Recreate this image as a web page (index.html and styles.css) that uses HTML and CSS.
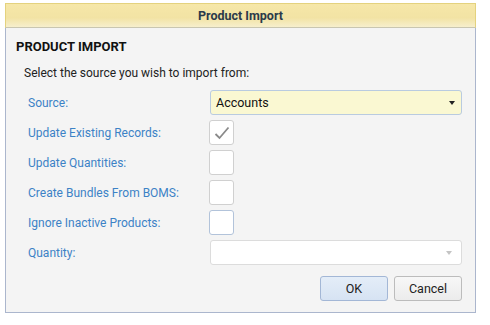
FILE: index.html
```html
<!doctype html>
<html>
<head>
<meta charset="utf-8">
<title>Product Import</title>
<link rel="stylesheet" href="styles.css">
</head>
<body>
<div class="win">
    <div class="winTitle">Product Import</div>
    <div class="winBody">
        <h2>PRODUCT IMPORT</h2>
        <p class="intro">Select the source you wish to import from:</p>
        <div class="form">
            <label>Source:</label>
            <div class="combo source">
                <span>Accounts</span>
                <i class="arrow"></i>
            </div>

            <label>Update Existing Records:</label>
            <div class="chk">
                <svg width="18" height="16" viewBox="0 0 18 16"><path d="M2.5 9 L6.5 13 L15.5 2.5" fill="none" stroke="#8a8a8a" stroke-width="1.8"/></svg>
            </div>

            <label>Update Quantities:</label>
            <div class="chk"></div>

            <label>Create Bundles From BOMS:</label>
            <div class="chk"></div>

            <label>Ignore Inactive Products:</label>
            <div class="chk focus"></div>

            <label>Quantity:</label>
            <div class="combo empty">
                <span></span>
                <i class="arrow"></i>
            </div>
        </div>
        <div class="btns">
            <button class="btn ok" type="button">OK</button>
            <button class="btn" type="button">Cancel</button>
        </div>
    </div>
</div>
</body>
</html>
```

FILE: styles.css
```css
*{ margin:0; padding:0; box-sizing:border-box}
body{ background:#fff; font-family:Roboto, "Liberation Sans", Arial, sans-serif; font-size:12px}
.win{ width:471px; margin:3px 0 0 5px}
.winTitle{ height:25px; line-height:24px; text-align:center; font-weight:bold; font-size:12.5px; color:#2b3a4a; border:1px solid #e4d27e; border-bottom-color:#c9c6b0; background:linear-gradient(#f6e7a8,#f2e3a4 60%,#f7efcd)}
.winBody{ height:285px; background:#f4f4f4; border:1px solid #abb6cd; border-top:none; padding:10px 0 0 10px}
.winBody h2{ font-size:13px; font-weight:bold; color:#111; line-height:16px; margin-top:1px}
.intro{ color:#222; font-size:12px; line-height:16px; margin:10px 0 0 8px}
.form{ display:grid; grid-template-columns:182px 252px; grid-auto-rows:25px; row-gap:5px; margin:9px 0 0 12px; align-items:center}
.form label{ color:#3c82c6; font-size:12px}
.combo{ height:25px; border:1px solid #c6d2e2; border-radius:3px; display:flex; align-items:center; justify-content:space-between; padding:0 6px 0 5px; font-size:12.5px; color:#111}
.source{ background:#faf8d2; border-color:#b9cbe0}
.empty{ background:#fff; border-color:#dcdcdc}
.arrow{ width:0; height:0; border-left:3.5px solid transparent; border-right:3.5px solid transparent; border-top:4px solid #222}
.empty .arrow{ border-top-color:#c4c4c4; margin-right:3px}
.chk{ width:25px; height:25px; margin-left:-1px; background:#fff; border:1px solid #d0d0d0; border-radius:3px; display:flex; align-items:center; justify-content:center}
.chk.focus{ border-color:#b2c3da}
.btns{ display:flex; justify-content:flex-end; gap:6px; margin:11px 13px 0 0}
.btn{ width:68px; height:25px; font-family:Roboto, "Liberation Sans", Arial, sans-serif; font-size:12.5px; color:#222; border:1px solid #bcbcbc; border-radius:3px; background:linear-gradient(#f7f7f7,#ececec)}
.btn.ok{ border-color:#a3b7d6; background:linear-gradient(#e4edf8,#d6e3f3)}
```
